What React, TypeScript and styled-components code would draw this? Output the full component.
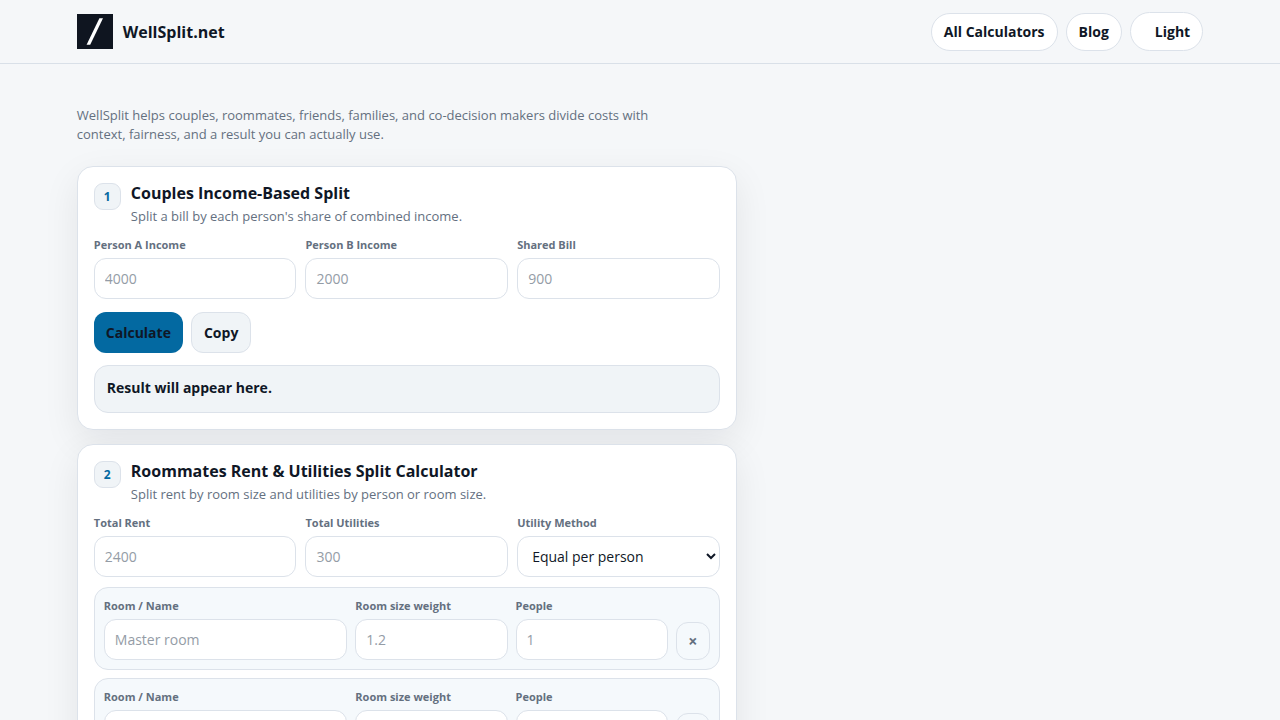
import React, { useId, useState } from "react";
import styled, { createGlobalStyle } from "styled-components";

const GlobalStyle = createGlobalStyle`
  *, *::before, *::after { box-sizing: border-box; }
  body {
    margin: 0;
    background: #f5f7f9;
    color: #0f1726;
    font-family: "Open Sans", sans-serif;
    font-size: 14px;
    line-height: 20px;
  }
  button, input, select { font-family: inherit; color: inherit; margin: 0; }
`;

const Header = styled.header`
  border-bottom: 1px solid #d9e0e8;
`;

const HeaderInner = styled.div`
  width: 88%;
  margin: 0 auto;
  padding: 12px 0;
  display: flex;
  align-items: center;
  justify-content: space-between;
`;

const Brand = styled.a`
  display: flex;
  align-items: center;
  gap: 10px;
  color: inherit;
  text-decoration: none;
  font-size: 16px;
  font-weight: 700;
`;

const Nav = styled.nav`
  display: flex;
  align-items: center;
  gap: 8px;
`;

const NavLink = styled.a`
  padding: 8px 12px;
  border: 1px solid #dce2ea;
  border-radius: 20px;
  background: #fff;
  color: inherit;
  text-decoration: none;
  font-size: 14px;
  font-weight: 700;
`;

const ThemeButton = styled.button`
  padding: 8px 12px 8px 24px;
  border: 1px solid #dce2ea;
  border-radius: 20px;
  background: #fff;
  font-size: 14px;
  line-height: 21px;
  font-weight: 700;
`;

const Main = styled.main`
  width: 88%;
  margin: 0 auto;
  padding: 42px 0 40px;
`;

const Column = styled.div`
  max-width: 660px;
  display: grid;
  gap: 14px;
`;

const Intro = styled.p`
  max-width: 580px;
  margin: 0 0 8px;
  color: #64707f;
  font-size: 13px;
  line-height: 19px;
`;

const Card = styled.section`
  padding: 16px;
  border: 1px solid #dce2ea;
  border-radius: 16px;
  background: #fff;
  box-shadow: 0 12px 36px rgba(15, 18, 28, 0.08);
`;

const CardHead = styled.div`
  display: flex;
  gap: 10px;
  margin-bottom: 10px;
`;

const Badge = styled.span`
  flex: none;
  width: 27px;
  height: 27px;
  display: grid;
  place-items: center;
  border: 1px solid #dce2ea;
  border-radius: 9px;
  background: #f0f4f7;
  color: #0369a1;
  font-size: 12px;
  font-weight: 700;
`;

const CardTitle = styled.h2`
  margin: 0 0 2px;
  font-size: 16px;
  line-height: 21px;
  font-weight: 700;
`;

const CardText = styled.p`
  margin: 0;
  color: #64707f;
  font-size: 13px;
  line-height: 20px;
`;

const Fields = styled.div`
  display: grid;
  grid-template-columns: repeat(3, minmax(0, 1fr));
  gap: 9px;
`;

const FieldBox = styled.div`
  min-width: 0;
`;

const Label = styled.label`
  display: block;
  margin-bottom: 4px;
  color: #64707f;
  font-size: 11px;
  line-height: 18px;
  font-weight: 700;
`;

const Input = styled.input`
  display: block;
  width: 100%;
  height: 41px;
  padding: 0 10px;
  border: 1px solid #dce2ea;
  border-radius: 12px;
  background: #fff;
  font-size: 14px;
  &::placeholder { color: #949ca6; opacity: 1; }
`;

const Select = styled.select`
  display: block;
  width: 100%;
  height: 41px;
  padding: 0 0 0 10px;
  border: 1px solid #dce2ea;
  border-radius: 12px;
  background: #fff;
  font-size: 14px;
`;

const Actions = styled.div`
  display: flex;
  gap: 8px;
  margin: 13px 0 12px;
`;

const Button = styled.button<{ $primary?: boolean }>`
  height: 41px;
  padding: 0 12px;
  border: ${(p) => (p.$primary ? "0" : "1px solid #dce2ea")};
  border-radius: 12px;
  background: ${(p) => (p.$primary ? "#0369a1" : "#f0f4f7")};
  font-size: 14px;
  font-weight: 700;
`;

const Result = styled.output`
  display: block;
  min-height: 48px;
  padding: 12px;
  border: 1px solid #dce2ea;
  border-radius: 14px;
  background: #f0f4f7;
  font-size: 14px;
  font-weight: 700;
`;

const Rooms = styled.div`
  display: grid;
  gap: 8px;
  margin-top: 10px;
`;

const RoomRow = styled.div`
  display: grid;
  grid-template-columns: minmax(0, 16fr) minmax(0, 10fr) minmax(0, 10fr) 34px;
  gap: 8px;
  align-items: end;
  padding: 9px;
  border: 1px solid #dce2ea;
  border-radius: 14px;
  background: #f5f9fc;
`;

const RemoveButton = styled.button`
  height: 38px;
  padding: 0;
  border: 1px solid #dce2ea;
  border-radius: 12px;
  background: transparent;
  color: #64707f;
  font-size: 16px;
  font-weight: 700;
`;

function Logo() {
  return (
    <svg width="36" height="35" viewBox="0 0 36 35" aria-hidden="true">
      <rect width="36" height="35" fill="#0f1520" />
      <path d="M22.4 4.3H26L13.2 30.7H9.6Z" fill="#fff" />
    </svg>
  );
}

function Field({ label, placeholder }: { label: string; placeholder: string }) {
  const id = useId();
  return (
    <FieldBox>
      <Label htmlFor={id}>{label}</Label>
      <Input id={id} placeholder={placeholder} />
    </FieldBox>
  );
}

function CardHeading({ step, title, text }: { step: number; title: string; text: string }) {
  return (
    <CardHead>
      <Badge>{step}</Badge>
      <div>
        <CardTitle>{title}</CardTitle>
        <CardText>{text}</CardText>
      </div>
    </CardHead>
  );
}

const initialRooms = [
  { id: 1, name: "Master room", weight: "1.2", people: "1" },
  { id: 2, name: "Room 2", weight: "1", people: "1" },
];

export default function App() {
  const [rooms, setRooms] = useState(initialRooms);
  return (
    <>
      <GlobalStyle />
      <Header>
        <HeaderInner>
          <Brand href="#">
            <Logo />
            WellSplit.net
          </Brand>
          <Nav>
            <NavLink href="#calculators">All Calculators</NavLink>
            <NavLink href="#blog">Blog</NavLink>
            <ThemeButton type="button">Light</ThemeButton>
          </Nav>
        </HeaderInner>
      </Header>
      <Main>
        <Column>
          <Intro>
            WellSplit helps couples, roommates, friends, families, and co-decision makers divide
            costs with context, fairness, and a result you can actually use.
          </Intro>
          <Card>
            <CardHeading
              step={1}
              title="Couples Income-Based Split"
              text="Split a bill by each person's share of combined income."
            />
            <Fields>
              <Field label="Person A Income" placeholder="4000" />
              <Field label="Person B Income" placeholder="2000" />
              <Field label="Shared Bill" placeholder="900" />
            </Fields>
            <Actions>
              <Button type="button" $primary>Calculate</Button>
              <Button type="button">Copy</Button>
            </Actions>
            <Result>Result will appear here.</Result>
          </Card>
          <Card>
            <CardHeading
              step={2}
              title="Roommates Rent & Utilities Split Calculator"
              text="Split rent by room size and utilities by person or room size."
            />
            <Fields>
              <Field label="Total Rent" placeholder="2400" />
              <Field label="Total Utilities" placeholder="300" />
              <FieldBox>
                <Label htmlFor="utility-method">Utility Method</Label>
                <Select id="utility-method">
                  <option>Equal per person</option>
                  <option>By room size</option>
                </Select>
              </FieldBox>
            </Fields>
            <Rooms>
              {rooms.map((room) => (
                <RoomRow key={room.id}>
                  <Field label="Room / Name" placeholder={room.name} />
                  <Field label="Room size weight" placeholder={room.weight} />
                  <Field label="People" placeholder={room.people} />
                  <RemoveButton
                    type="button"
                    aria-label="Remove room"
                    onClick={() => setRooms(rooms.filter((r) => r.id !== room.id))}
                  >
                    ×
                  </RemoveButton>
                </RoomRow>
              ))}
            </Rooms>
          </Card>
        </Column>
      </Main>
    </>
  );
}
